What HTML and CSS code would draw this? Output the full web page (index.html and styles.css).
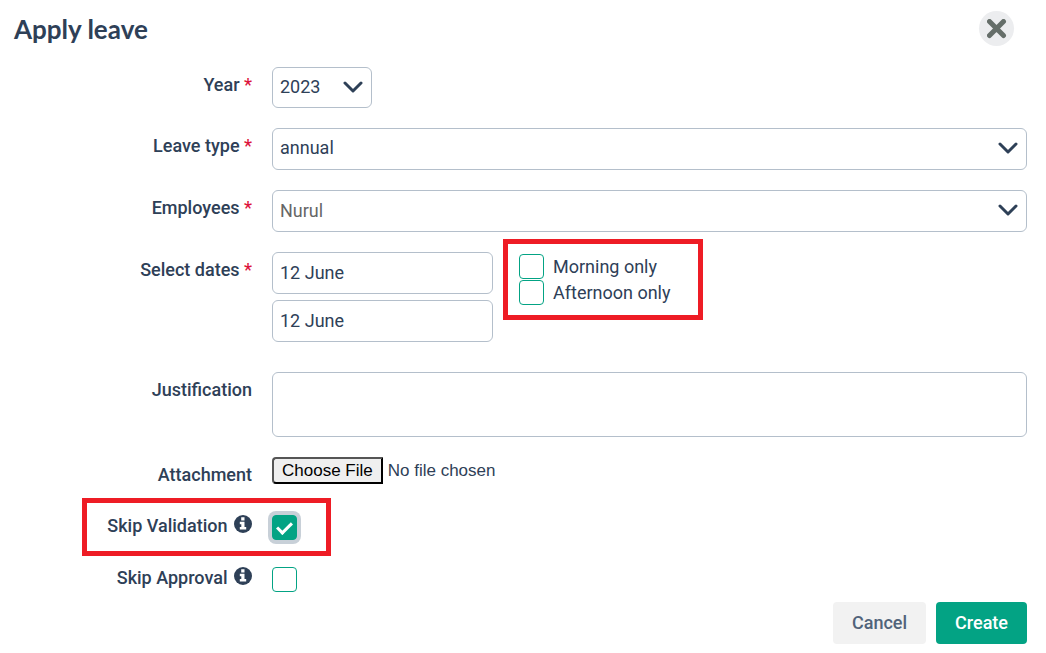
FILE: index.html
```
<!DOCTYPE html>
<html lang="en">
<head>
    <meta charset="UTF-8">
    <meta name="viewport" content="width=device-width, initial-scale=1.0">
    <title>Apply leave</title>
    <link rel="stylesheet" href="styles.css">
</head>
<body>
    <div class="modal">
        <header class="modal-header">
            <h1 class="modal-title">Apply leave</h1>
            <button type="button" class="close-button" aria-label="Close">
                <svg width="20" height="20" viewBox="0 0 20 20"><path d="M2.500 2.500l14 14M16.500 2.500l-14 14"/></svg>
            </button>
        </header>

        <form class="leave-form">
            <div class="form-row">
                <label class="form-label" for="year">Year <span class="required">*</span></label>
                <div class="select-box select-year">
                    <select class="form-input" id="year" name="year">
                        <option>2023</option>
                    </select>
                    <svg class="chevron" width="20" height="12" viewBox="0 0 20 12"><path d="M2 2l8 8 8-8"/></svg>
                </div>
            </div>

            <div class="form-row">
                <label class="form-label" for="leave-type">Leave type <span class="required">*</span></label>
                <div class="select-box">
                    <select class="form-input" id="leave-type" name="leave_type">
                        <option>annual</option>
                    </select>
                    <svg class="chevron" width="20" height="12" viewBox="0 0 20 12"><path d="M2 2l8 8 8-8"/></svg>
                </div>
            </div>

            <div class="form-row">
                <label class="form-label" for="employees">Employees <span class="required">*</span></label>
                <div class="select-box">
                    <select class="form-input input-muted" id="employees" name="employees">
                        <option>Nurul</option>
                    </select>
                    <svg class="chevron" width="20" height="12" viewBox="0 0 20 12"><path d="M2 2l8 8 8-8"/></svg>
                </div>
            </div>

            <div class="form-row row-dates">
                <label class="form-label" for="date-from">Select dates <span class="required">*</span></label>
                <div class="dates">
                    <div class="date-inputs">
                        <input type="text" class="form-input" id="date-from" name="date_from" value="12 June">
                        <input type="text" class="form-input" id="date-to" name="date_to" value="12 June" aria-label="End date">
                    </div>
                    <div class="half-days highlight">
                        <label class="check-label"><input type="checkbox" class="checkbox" name="morning">Morning only</label>
                        <label class="check-label"><input type="checkbox" class="checkbox" name="afternoon">Afternoon only</label>
                    </div>
                </div>
            </div>

            <div class="form-row">
                <label class="form-label" for="justification">Justification</label>
                <textarea class="form-input form-textarea" id="justification" name="justification"></textarea>
            </div>

            <div class="form-row row-file">
                <label class="form-label" for="attachment">Attachment</label>
                <input type="file" class="file-input" id="attachment" name="attachment">
            </div>

            <div class="form-row row-skip highlight">
                <label class="form-label" for="skip-validation">Skip Validation
                    <svg class="info-icon" width="18" height="18" viewBox="0 0 18 18"><circle cx="9" cy="9" r="9"/><path d="M7.200 2.300h3.300v3.200H7.200zM5.800 6.700h4.700v5.300h1.700v2.500H5.800V12h1.500V9.200H5.800z"/></svg>
                </label>
                <input type="checkbox" class="checkbox checkbox-focus" id="skip-validation" name="skip_validation" checked>
            </div>

            <div class="form-row row-skip">
                <label class="form-label" for="skip-approval">Skip Approval
                    <svg class="info-icon" width="18" height="18" viewBox="0 0 18 18"><circle cx="9" cy="9" r="9"/><path d="M7.200 2.300h3.300v3.200H7.200zM5.800 6.700h4.700v5.300h1.700v2.500H5.800V12h1.500V9.200H5.800z"/></svg>
                </label>
                <input type="checkbox" class="checkbox" id="skip-approval" name="skip_approval">
            </div>

            <div class="form-actions">
                <button type="button" class="button button-cancel">Cancel</button>
                <button type="submit" class="button button-create">Create</button>
            </div>
        </form>
    </div>
</body>
</html>
```
FILE: styles.css
```
*,
*::before,
*::after {
    margin: 0;
    padding: 0;
    box-sizing: border-box;
}

body {
    font-family: Roboto, "Liberation Sans", sans-serif;
    font-size: 18px;
    line-height: 24px;
    color: #2e4057;
    background: #fff;
}

.modal {
    padding: 11px 19px 9px 14px;
}

.modal-header {
    display: flex;
    align-items: center;
    justify-content: space-between;
    margin-bottom: 21px;
    padding-right: 13px;
}

.modal-title {
    font-family: Lato, sans-serif;
    font-size: 26px;
    font-weight: 700;
    line-height: 34px;
}

.close-button {
    display: flex;
    align-items: center;
    justify-content: center;
    width: 35px;
    height: 35px;
    border: none;
    border-radius: 50%;
    background: #ecedef;
    cursor: pointer;
}

.close-button path {
    fill: none;
    stroke: #656e69;
    stroke-width: 5;
    stroke-linecap: round;
}

/* Form rows */
.leave-form {
    display: flex;
    flex-direction: column;
    gap: 20px;
}

.form-row {
    display: grid;
    grid-template-columns: 238px 1fr;
    column-gap: 20px;
    align-items: start;
    position: relative;
}

.form-label {
    padding-top: 6px;
    font-weight: 500;
    text-align: right;
}

.required {
    color: #dc143c;
}

.form-input {
    display: block;
    width: 100%;
    height: 42px;
    padding: 0 7px 2px;
    border: 1px solid #b4bfcb;
    border-radius: 6px;
    background: #fff;
    color: inherit;
    font: inherit;
    appearance: none;
}

.form-input:focus {
    outline: none;
    border-color: #03a384;
}

.input-muted {
    padding-bottom: 0;
    color: #666;
}

.select-box {
    position: relative;
}

.select-year {
    width: 100px;
}

.select-year .form-input {
    height: 41px;
}

.chevron {
    position: absolute;
    top: 14px;
    right: 9px;
    fill: none;
    stroke: #2e4057;
    stroke-width: 3;
    stroke-linecap: round;
    stroke-linejoin: round;
    pointer-events: none;
}

/* Dates */
.row-dates {
    margin-bottom: 10px;
}

.dates {
    display: flex;
    align-items: flex-start;
    gap: 26px;
}

.date-inputs {
    display: grid;
    gap: 6px;
    width: 221px;
}

.half-days {
    display: grid;
    gap: 1px;
    padding-top: 2px;
    position: relative;
}

.check-label {
    display: flex;
    align-items: center;
    gap: 9px;
}

.checkbox {
    display: grid;
    place-items: center;
    width: 25px;
    height: 25px;
    border: 1px solid #03a384;
    border-radius: 4px;
    background: #fff;
    appearance: none;
    cursor: pointer;
}

.checkbox:checked {
    background: #03a384;
}

.checkbox:checked::after {
    content: "";
    width: 15px;
    height: 9px;
    margin-bottom: 3px;
    border: solid #fff;
    border-width: 0 0 3px 3px;
    transform: rotate(-45deg);
}

.checkbox-focus {
    box-shadow: 0 0 0 4px #c8d0d8;
}

.form-textarea {
    height: 65px;
    padding: 8px;
    resize: none;
}

/* Attachment */
.row-file {
    min-height: 31px;
}

.file-input {
    height: 27px;
    font-family: "Liberation Sans", Arial, sans-serif;
    font-size: 17px;
    line-height: 23px;
    color: inherit;
}

.file-input::file-selector-button {
    height: 27px;
    margin-right: 5px;
    padding: 0 8px;
    border: 2px solid #000;
    border-top-color: #555;
    border-left-color: #555;
    border-radius: 4px 0 0 4px;
    background: #efefef;
    color: #000;
    font: inherit;
}

/* Skip options */
.row-skip .checkbox {
    margin-top: 7px;
}

.info-icon {
    margin-left: 2px;
    vertical-align: -1px;
    fill: #2e4057;
}

.info-icon path {
    fill: #fff;
}

.highlight::before {
    content: "";
    position: absolute;
    border: 5px solid #ee1c25;
    pointer-events: none;
}

.half-days.highlight::before {
    inset: -13px -32px -15px -16px;
}

.row-skip.highlight::before {
    top: -10px;
    left: 68px;
    width: 249px;
    height: 58px;
}

/* Buttons */
.form-actions {
    display: flex;
    justify-content: flex-end;
    gap: 10px;
    margin-top: -10px;
}

.button {
    height: 42px;
    padding: 0 19px;
    border: none;
    border-radius: 4px;
    font: inherit;
    font-weight: 500;
    cursor: pointer;
}

.button-cancel {
    background: #f2f2f2;
    color: #51637a;
}

.button-create {
    background: #03a384;
    color: #fff;
}
```
